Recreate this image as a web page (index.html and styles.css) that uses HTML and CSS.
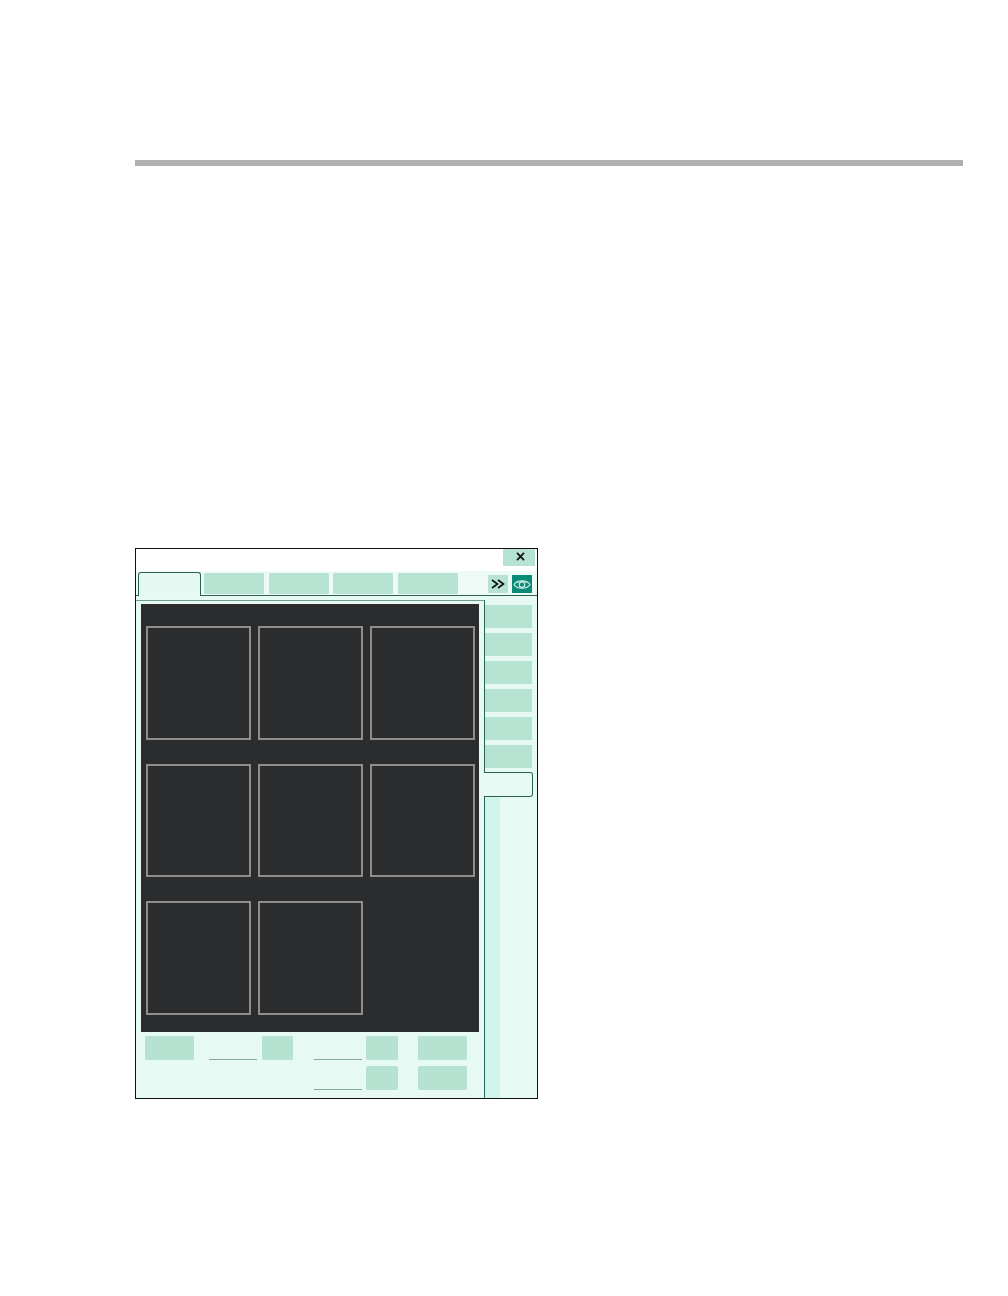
FILE: index.html
```html
<!DOCTYPE html>
<html lang="en">
<head>
<meta charset="utf-8">
<title>Monitor window</title>
<link rel="stylesheet" href="styles.css">
</head>
<body>
<div class="rule"></div>
<div class="window">
  <div class="titlebar">
    <div class="close">
      <svg width="9" height="9" viewBox="0 0 9 9"><path d="M1 .8 8 8.2M8 .8 1 8.2" stroke="#111" stroke-width="1.7" fill="none"/></svg>
    </div>
  </div>
  <div class="tabbar">
    <div class="tab active"></div>
    <div class="tab"></div>
    <div class="tab"></div>
    <div class="tab"></div>
    <div class="tab"></div>
    <div class="more">
      <svg width="14" height="10" viewBox="0 0 14 10"><path d="M1 1 6.5 5 1 9M7 1 12.5 5 7 9" stroke="#111" stroke-width="1.6" fill="none"/></svg>
    </div>
    <div class="eye">
      <svg width="18" height="13" viewBox="0 0 18 13"><path d="M1 6.5C4 1.5 14 1.5 17 6.5 14 11.5 4 11.5 1 6.5Z" stroke="#d5f1e8" stroke-width="1.1" fill="none"/><path d="M3.5 4.8C7 3.2 11 3.2 14.5 4.8" stroke="#d5f1e8" stroke-width=".8" fill="none"/><circle cx="9" cy="6.7" r="2.7" stroke="#d5f1e8" stroke-width="1.1" fill="none"/></svg>
    </div>
  </div>
  <div class="body">
    <div class="panel">
      <div class="screen">
        <div class="cell"></div><div class="cell"></div><div class="cell"></div>
        <div class="cell"></div><div class="cell"></div><div class="cell"></div>
        <div class="cell"></div><div class="cell"></div>
      </div>
      <div class="controls">
        <div class="btn wide"></div>
        <div class="field f1"></div>
        <div class="btn narrow"></div>
        <div class="stack fields">
          <div class="field"></div>
          <div class="field"></div>
        </div>
        <div class="stack">
          <div class="btn small"></div>
          <div class="btn small"></div>
        </div>
        <div class="stack last">
          <div class="btn wide2"></div>
          <div class="btn wide2"></div>
        </div>
      </div>
    </div>
    <div class="side">
      <div class="side-tabs">
        <div class="stab"></div>
        <div class="stab"></div>
        <div class="stab"></div>
        <div class="stab"></div>
        <div class="stab"></div>
        <div class="stab"></div>
      </div>
      <div class="stab-active"></div>
      <div class="side-rest"><div class="strip"></div></div>
    </div>
  </div>
</div>
</body>
</html>
```
FILE: styles.css
```css
* { box-sizing: border-box; }
html, body { margin: 0; padding: 0; background: #fff; }
body { width: 1008px; height: 1296px; padding: 160px 0 0 135px; overflow: hidden; }
.rule { width: 828px; height: 6px; background: #b0b0b0; }
.window {
  margin-top: 382px; width: 403px; height: 551px;
  border: 1px solid #111; background: #e6f9f2;
  display: flex; flex-direction: column;
}
.titlebar { height: 22px; background: #fff; display: flex; justify-content: flex-end; padding-right: 2px; flex: none; }
.close { width: 32px; height: 17px; background: #b7e3d2; display: flex; align-items: center; justify-content: center; padding: 0 0 2px 2px; }
.tabbar {
  height: 25px; flex: none; background: #eefaf6;
  border-bottom: 1px solid #2a6355;
  display: flex; align-items: flex-start; padding: 1px 0 0 2px; position: relative;
}
.tab { width: 60px; height: 21px; background: #b7e3d2; border-radius: 1px; margin-right: 4.6px; margin-top: 1px; }
.tab.active {
  width: 63px; height: 24px; margin: 0 3px 0 0;
  background: #e4f9f2; border: 1px solid #2a6355; border-bottom: 0;
  border-radius: 3px 3px 0 0;
}
.more { width: 20px; height: 18px; margin: 3px 4px 0 25.5px; background: #b7e3d2; display: flex; align-items: center; justify-content: center; }
.eye { width: 20px; height: 18px; margin-top: 3px; background: #0b8a78; display: flex; align-items: center; justify-content: center; }
.body { flex: 1; display: flex; min-height: 0; }
.panel {
  width: 349px; flex: none; margin-top: 4px;
  border-top: 1px solid #6f9a8e; border-right: 1px solid #2a6355;
  padding: 3px 4px 0 5px; background: #e6f9f2;
}
.screen {
  width: 338px; height: 428px; background: #2b2c2e;
  display: grid; grid-template-columns: repeat(3, 104.5px); column-gap: 7.5px;
  grid-template-rows: repeat(3, 113.5px); row-gap: 24px;
  padding: 22px 0 0 5px;
}
.cell { border: 2px solid #8e8e8e; }
.controls { display: flex; align-items: flex-start; padding: 4px 0 0 4px; }
.btn { background: #b6e2d1; border-radius: 2px; }
.wide { width: 49px; height: 24px; }
.field { width: 48px; height: 24px; border-bottom: 1px solid #85a89d; }
.f1 { margin: 0 5px 0 15px; }
.narrow { width: 31px; height: 24px; margin-right: 21px; }
.stack { display: flex; flex-direction: column; gap: 6px; margin-right: 20px; }
.stack.fields { margin-right: 4px; }
.small { width: 32px; height: 24px; }
.wide2 { width: 49px; height: 24px; }
.stack.last { margin-right: 0; }
.side { flex: 1; display: flex; flex-direction: column; min-width: 0; }
.side-tabs { display: flex; flex-direction: column; gap: 4.6px; padding: 9px 5px 0 0; height: 176px; flex: none; }
.stab { height: 23.4px; background: #b7e3d2; }
.stab-active {
  height: 25px; width: 49px; flex: none; margin-left: -1px;
  background: #e8faf4; border: 1px solid #2a6355; border-left: 0;
  border-radius: 0 3px 3px 0;
}
.side-rest { flex: 1; background: #e6f9f2; }
.strip { width: 15px; height: 100%; background: #cff5ea; }
```
